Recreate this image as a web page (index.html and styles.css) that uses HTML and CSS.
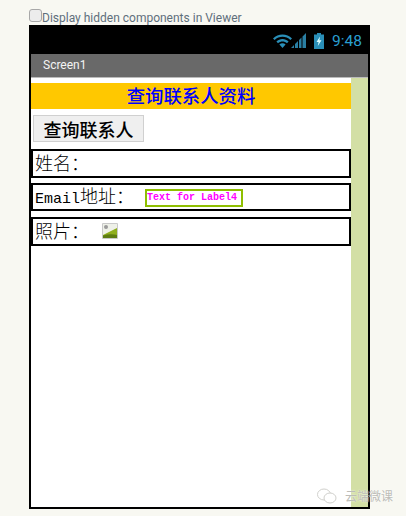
FILE: index.html
```html
<!DOCTYPE html>
<html lang="zh">
<head>
<meta charset="utf-8">
<title>Screen1</title>
<link rel="stylesheet" href="styles.css">
</head>
<body>
<label class="toggle"><input type="checkbox" class="check"><span class="toggle-text">Display hidden components in Viewer</span></label>
<div class="phone">
  <div class="status">
    <svg class="wifi" width="19" height="14" viewBox="0 0 19 14"><path d="M0 4.5C5 -1 14 -1 19 4.5L17.4 6C13 1.6 6 1.6 1.6 6Z" fill="#2a8fb8"/><path d="M3.4 7.6C6.6 4.2 12.4 4.2 15.6 7.6L14 9.2C11.6 6.8 7.4 6.8 5 9.2Z" fill="#2a8fb8"/><path d="M6.4 10.4C8 9 11 9 12.6 10.4L9.5 14Z" fill="#2a8fb8"/></svg>
    <svg class="signal" width="15" height="15" viewBox="0 0 15 15"><path d="M0 15L3 12V15ZM4 15V11L7 8V15ZM8 15V7L10.5 4.5V15ZM11.5 15V3.5L15 0V15Z" fill="#2a7fa3"/></svg>
    <svg class="battery" width="10" height="16" viewBox="0 0 10 16"><path d="M3 0H7V1.5H10V16H0V1.5H3Z" fill="#2a8fb8"/><path d="M6 3.5L2.5 9H4.6L3.8 13L7.5 7.2H5.4Z" fill="#dff"/></svg>
    <span class="time">9:48</span>
  </div>
  <div class="titlebar">Screen1</div>
  <div class="viewer">
    <div class="content">
      <div class="heading">查询联系人资料</div>
      <button class="query" type="button">查询联系人</button>
      <div class="row row-name"><span class="label label-raised">姓名：</span></div>
      <div class="row row-email"><span class="label"><span class="latin">Email</span>地址：</span><span class="value">Text for Label4</span></div>
      <div class="row row-photo"><span class="label label-raised">照片：</span>
        <svg class="photo" width="16" height="16" viewBox="0 0 16 16"><rect width="16" height="16" rx="1" fill="#c9c9c9"/><rect x="1" y="1" width="14" height="14" fill="#eef0e8"/><circle cx="4" cy="4" r="2" fill="#9a9a9a"/><path d="M1 12L15 5V15H1Z" fill="#8fae1e"/><path d="M1 15V12.5C6 11 11 11 15 12V15Z" fill="#5d7c12"/></svg>
      </div>
    </div>
    <div class="scroll"></div>
  </div>
</div>
<div class="mark">
  <svg width="20" height="16" viewBox="0 0 20 16"><ellipse cx="7" cy="6.5" rx="6.5" ry="5.5" fill="#fff" stroke="#d0d0cc"/><ellipse cx="13" cy="10" rx="6" ry="5" fill="#fff" stroke="#d0d0cc"/></svg>
  <span>云端微课</span>
</div>
</body>
</html>
```
FILE: styles.css
```css
* { box-sizing: border-box; }
html, body { margin: 0; padding: 0; }
body {
  width: 406px;
  height: 516px;
  background: #f8f8f2;
  overflow: hidden;
  position: relative;
  padding: 8px 0 0 29px;
  font-family: "Noto Sans CJK SC", sans-serif;
}
.toggle {
  display: flex;
  height: 17px;
  color: #5f6f7c;
  font: 12px/20px Roboto, sans-serif;
}
.check {
  width: 13px;
  height: 13px;
  margin: 1px 0 0 0;
  flex: none;
  appearance: none;
  border: 1px solid #a8a8a8;
  border-radius: 3px;
  background: #ececec;
}
.phone {
  width: 341px;
  height: 484px;
  border: solid #000;
  border-width: 0 2px 2px;
  display: flex;
  flex-direction: column;
  background: #fff;
}
.status {
  height: 29px;
  flex: none;
  background: #000;
  display: flex;
  align-items: center;
  justify-content: flex-end;
  padding-right: 8px;
  margin: 0 -2px;
  padding-top: 2px;
}
.signal { margin-left: -1px; margin-right: 8px; }
.battery { margin-right: 8px; }
.time {
  color: #2a9fd0;
  font: 15.5px/20px Roboto, sans-serif;
}
.titlebar {
  height: 24px;
  flex: none;
  background: #696969;
  border-bottom: 1px solid #bbb;
  color: #f4f4f4;
  font: 12px/22px Roboto, sans-serif;
  padding-left: 12px;
}
.viewer {
  flex: 1;
  display: flex;
}
.content {
  width: 320px;
  padding-top: 5px;
}
.scroll {
  flex: 1;
  background: #d3dfa5;
}
.heading {
  height: 26px;
  background: #ffc800;
  color: #0000ff;
  font-size: 18.4px;
  font-weight: 500;
  line-height: 25px;
  text-align: center;
}
.query {
  display: block;
  width: 111px;
  height: 27px;
  margin: 6px 0 7px 2px;
  padding: 0;
  border: 1px solid #d0d0d0;
  background: #efefef;
  color: #000;
  font: 500 18px/24px "Noto Sans CJK SC", sans-serif;
}
.row {
  height: 29px;
  width: 320px;
  border: 2px solid #000;
  display: flex;
  align-items: center;
  padding-left: 2px;
  margin-bottom: 5px;
}
.label {
  font: 300 18px/24px "Noto Sans CJK SC", sans-serif;
  color: #000;
  white-space: pre;
}
.label-raised { padding-bottom: 4px; }
.latin {
  font: 15px/24px "Liberation Mono", monospace;
}
.row-email { height: 28px; margin-bottom: 6px; }
.value {
  margin-left: 11px;
  margin-top: 1px;
  width: 98px;
  height: 18px;
  border: 2px solid #8fbf00;
  color: #ff00ff;
  font: bold 10px/14px "Liberation Mono", monospace;
  white-space: pre;
}
.photo { margin: -2px 0 0 13px; }
.mark {
  position: absolute;
  left: 317px;
  top: 488px;
  display: flex;
  align-items: center;
  gap: 8px;
  color: #bdbdb8;
  font-size: 12px;
  line-height: 16px;
  text-shadow: 0 0 2px #fff;
}
.mark svg { flex: none; }
```
